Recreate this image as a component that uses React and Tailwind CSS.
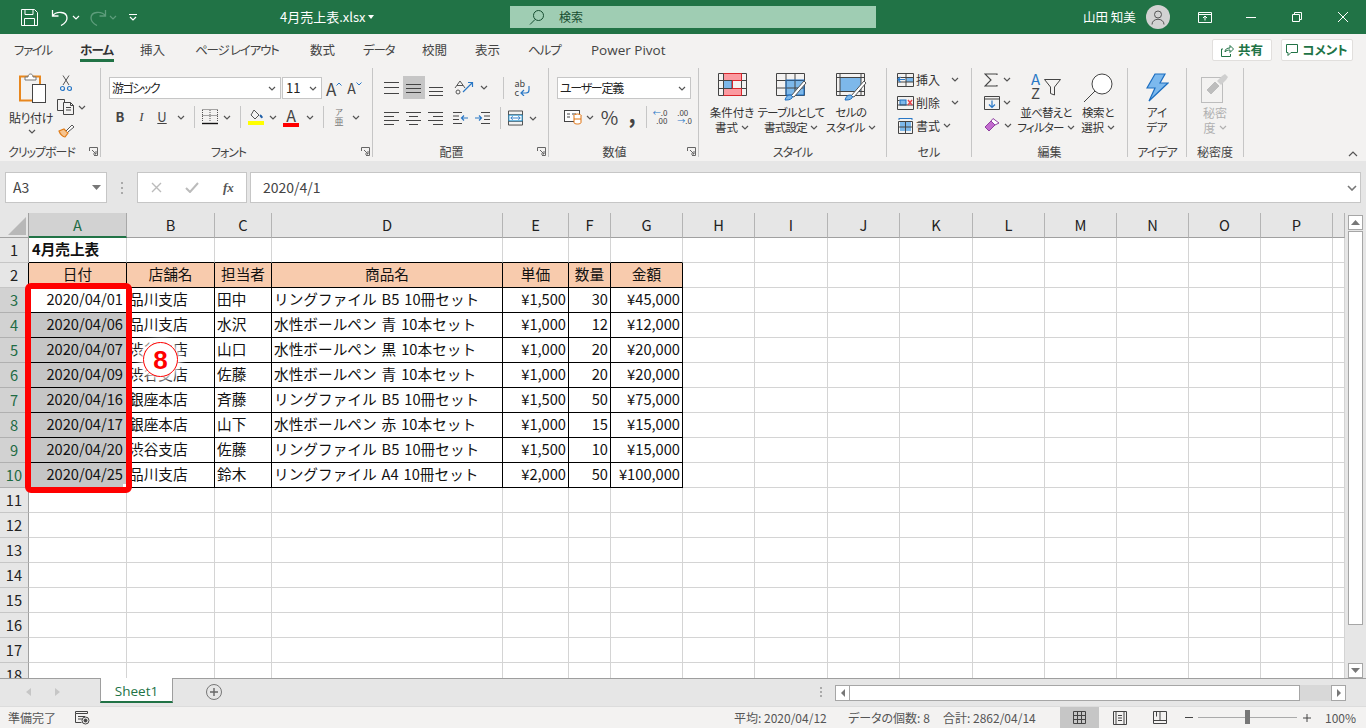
import React from 'react';

const Chev = ({ className = 'text-[#555]' }) => (
  <svg width="8" height="5" viewBox="0 0 8 5" className={`shrink-0 ${className}`} fill="none" stroke="currentColor" strokeWidth="1.2">
    <path d="M1 1l3 3 3-3" />
  </svg>
);

const Launcher = () => (
  <svg width="9" height="9" viewBox="0 0 9 9" className="absolute right-[2px] bottom-[1px]" fill="none" stroke="#666">
    <path d="M.5 4V.5h8v8H5M3 3l4 4M7 4v3H4" />
  </svg>
);

const Group = ({ className, label, launcher, labelClass = 'text-[#444]', children }) => (
  <div className={`relative h-[89px] mt-[2px] shrink-0 border-r border-[#c6c6c6] flex flex-col ${className}`}>
    <div className="h-[74px] shrink-0 relative">{children}</div>
    <div className={`h-[15px] leading-[20px] text-[12px] text-center ${labelClass}`}>{label}</div>
    {launcher && <Launcher />}
  </div>
);

const Slot = ({ className, children }) => (
  <div className={`flex items-center justify-center shrink-0 h-full ${className}`}>{children}</div>
);

const VSep = ({ className }) => (
  <div className={`flex items-center justify-center shrink-0 h-full ${className}`}>
    <div className="w-px h-[22px] bg-[#c6c6c6]" />
  </div>
);

const Combo = ({ className, textClass = '', children }) => (
  <div className={`h-[22px] shrink-0 bg-white border border-[#c6c6c6] flex items-center justify-between pl-[2px] pr-[4px] text-[13px] text-[#222] ${className}`}>
    <span className={textClass}>{children}</span>
    <Chev />
  </div>
);

const Lines = ({ ys, xs }) => (
  <svg width="16" height="16" viewBox="0 0 16 16" stroke="#444" fill="none">
    {ys.map((y, i) => (
      <path key={i} d={`M${xs[i][0]} ${y + 0.5}H${xs[i][1]}`} />
    ))}
  </svg>
);

const PasteIcon = () => (
  <svg width="28" height="32" viewBox="0 0 28 32" fill="none">
    <rect x="1" y="4.5" width="20" height="24" fill="#f3f2f1" stroke="#e8871e" strokeWidth="2" />
    <path d="M6 8V5h3c0-4 5-4 5 0h3v3z" fill="#fff" stroke="#777" />
    <rect x="13.5" y="12.5" width="13" height="18" fill="#fff" stroke="#444" />
  </svg>
);

const ScissorsIcon = () => (
  <svg width="12" height="17" viewBox="0 0 12 17" fill="none">
    <path d="M3 10L9 .5M9 10L3 .5" stroke="#555" />
    <circle cx="2.5" cy="13.5" r="2" stroke="#2a78c6" strokeWidth="1.2" />
    <circle cx="9.5" cy="13.5" r="2" stroke="#2a78c6" strokeWidth="1.2" />
  </svg>
);

const CopyIcon = () => (
  <svg width="18" height="16" viewBox="0 0 18 16" fill="none" stroke="#444">
    <path d="M6.5 11.5h-6V.5h7v3" />
    <path d="M6.5 3.5h7l3 3v9h-10zM9 8.5h5M9 11h5M13.5 3.5v3h3" fill="#f3f2f1" />
  </svg>
);

const PainterIcon = () => (
  <svg width="17" height="15" viewBox="0 0 17 15" fill="none">
    <path d="M1 8l5-2 4 4-3 4c-2 0-5-3-6-6z" fill="#f6c48f" stroke="#e07b16" strokeWidth="1.2" />
    <path d="M8 8l6-6 2 2-6 5" fill="#fff" stroke="#555" />
  </svg>
);

const BorderIcon = () => (
  <svg width="16" height="16" viewBox="0 0 16 16" fill="none">
    <path d="M.5 1v11M15.5 1v11M.5 .5h15M8 1v11M.5 6.5h15" stroke="#555" strokeDasharray="1 1" />
    <path d="M0 14.5h16" stroke="#111" strokeWidth="1.4" />
  </svg>
);

const FillIcon = () => (
  <svg width="17" height="16" viewBox="0 0 17 16" fill="none">
    <path d="M6 1l5 5-4 4-4-4z" stroke="#555" />
    <path d="M12 6c2 0 2.500 2 2 3l-1.500-1z" fill="#1f5fa8" stroke="#1f5fa8" />
    <rect x="0" y="12" width="16" height="4" fill="#ffff00" />
  </svg>
);

const FontColorIcon = () => (
  <div className="w-[16px] flex flex-col items-center">
    <span className="text-[16px] leading-[14px] text-[#444]">A</span>
    <div className="w-[16px] h-[4px] bg-[#ff0000] mt-[1px]" />
  </div>
);

const PhoneticIcon = () => (
  <div className="flex flex-col items-center text-[#777] leading-[10px]">
    <span className="text-[8px]">ア</span>
    <span className="text-[9px]">亜</span>
  </div>
);

const OrientIcon = () => (
  <svg width="20" height="17" viewBox="0 0 20 17" fill="none">
    <path d="M1 9l5-7 5 7M3 6.500h6" stroke="#555" />
    <path d="M9 13L18 4M14 3.500h4.500V8" stroke="#2a78c6" strokeWidth="1.2" />
    <circle cx="4" cy="13" r="2" stroke="#555" />
  </svg>
);

const WrapIcon = () => (
  <div className="relative w-[16px] h-[17px] text-[9px] leading-[9px] text-[#444]">
    <div>ab</div>
    <div>c</div>
    <svg width="16" height="17" viewBox="0 0 16 17" fill="none" className="absolute inset-0">
      <path d="M14 7v4c0 2-1 3-3 3H6M9 11l-3 3 3 3" stroke="#2a78c6" strokeWidth="1.2" />
    </svg>
  </div>
);

const MergeIcon = () => (
  <svg width="16" height="16" viewBox="0 0 16 16" fill="none">
    <path d="M.5 .5h15v15H.5zM.5 4.500h15M.5 11.500h15" stroke="#444" />
    <rect x="1" y="5" width="14" height="6" fill="#fff" stroke="#2a9ad6" />
    <path d="M3 8h10M5 6l-2 2 2 2M11 6l2 2-2 2" stroke="#2a78c6" />
  </svg>
);

const IndentIcon = ({ flip }) => (
  <svg width="15" height="14" viewBox="0 0 15 14" fill="none" className={flip ? '-scale-x-100' : ''}>
    <path d="M6 1.500h9M9 5h6M9 8.500h6M6 12.500h9" stroke="#444" />
    <path d="M0 7h6M4 4.500L6.500 7 4 9.500" stroke="#2a78c6" strokeWidth="1.2" />
  </svg>
);

const AccountIcon = () => (
  <svg width="18" height="15" viewBox="0 0 18 15" fill="none">
    <rect x=".5" y=".5" width="15" height="11" fill="#fff" stroke="#444" />
    <path d="M3 4h3M8 4h4M3 7h3" stroke="#444" />
    <ellipse cx="13.500" cy="5.500" rx="3.500" ry="1.500" fill="#fff" stroke="#e0720f" />
    <path d="M10 5.500v7c0 2 7 2 7 0v-7M10 9h7" fill="#fff" stroke="#e0720f" />
  </svg>
);

const CondIcon = () => (
  <svg width="29" height="23" viewBox="0 0 29 23" fill="none">
    <rect x="5" y="0" width="18" height="7" fill="#fb9aa0" />
    <rect x="5" y="8" width="9" height="7" fill="#7db8ea" />
    <rect x="5" y="15" width="18" height="7" fill="#fb9aa0" />
    <path d="M.5 .5h28v22H.5zM5.500 0v23M14 8v7M23.500 0v23M.5 7.500h28M.5 15.500h28" stroke="#444" />
    <path d="M5.500 .5h18v7h-9v8h9v7h-18" stroke="#d9262c" />
  </svg>
);

const TableIcon = () => (
  <svg width="31" height="28" viewBox="0 0 31 28" fill="none">
    <rect x="10" y="7" width="18" height="15" fill="#7db8ea" />
    <path d="M.5 .5h28v22H.5zM10 0v23M19 0v23M.5 7.500h28M.5 15h28" stroke="#444" />
    <path d="M10 7h18v15H10z" stroke="#1f6fc0" />
    <path d="M15 23L28 8l2 2-12 14z" fill="#fff" stroke="#555" />
    <path d="M9 27c1-3 2-5 5-5 2 0 3 2 2 3-2 2-4 2-7 2z" fill="#7db8ea" stroke="#1f6fc0" />
  </svg>
);

const CellStyleIcon = () => (
  <svg width="31" height="28" viewBox="0 0 31 28" fill="none">
    <rect x="4" y="5" width="21" height="13" fill="#7db8ea" />
    <path d="M.5 .5h28v22H.5zM.5 4.500h28M4 0v23M25 0v23M.5 18.500h28" stroke="#444" />
    <path d="M15 23L28 8l2 2-12 14z" fill="#fff" stroke="#555" />
    <path d="M9 27c1-3 2-5 5-5 2 0 3 2 2 3-2 2-4 2-7 2z" fill="#7db8ea" stroke="#1f6fc0" />
  </svg>
);

const InsertCellIcon = () => (
  <svg width="17" height="14" viewBox="0 0 17 14" fill="none">
    <rect x="9" y="4" width="7" height="5" fill="#7db8ea" />
    <path d="M.5 .5h16v13H.5zM9 0v14M.5 4.500h16M.5 9h16" stroke="#444" />
    <path d="M1 6.500h7M3.500 4L1 6.500 3.500 9" stroke="#2a78c6" strokeWidth="1.2" fill="#f3f2f1" />
  </svg>
);

const DeleteCellIcon = () => (
  <svg width="17" height="14" viewBox="0 0 17 14" fill="none">
    <rect x="3" y="4" width="6" height="5" fill="#7db8ea" stroke="#1f6fc0" />
    <path d="M.5 .5h16v13H.5zM.5 4.500h2M.5 9h16" stroke="#444" />
    <path d="M11 4l4 5M15 4l-4 5" stroke="#e8414a" strokeWidth="1.4" />
  </svg>
);

const FormatCellIcon = () => (
  <svg width="17" height="16" viewBox="0 0 17 16" fill="none">
    <rect x="3" y="4" width="11" height="9" fill="#7db8ea" />
    <path d="M1.500 3.500h14v12h-14zM8.500 4v11M1.500 9h14" stroke="#444" />
    <path d="M2 .5h13M2 0v2M15 0v2" stroke="#2a78c6" />
  </svg>
);

const SigmaIcon = () => (
  <svg width="14" height="14" viewBox="0 0 14 14" fill="none">
    <path d="M13 2V1H1l6 6-6 6h12v-1" stroke="#444" strokeWidth="1.1" />
  </svg>
);

const FillDownIcon = () => (
  <svg width="16" height="14" viewBox="0 0 16 14" fill="none">
    <path d="M.5 .5h15v13H.5zM.5 3h15" stroke="#444" />
    <path d="M8 4.500v7M5 8.500l3 3 3-3" stroke="#2a78c6" strokeWidth="1.2" />
  </svg>
);

const EraserIcon = () => (
  <svg width="16" height="15" viewBox="0 0 16 15" fill="none">
    <path d="M1 9l6-6 4 4-6 6z" fill="#c36bcf" stroke="#8f3fa0" />
    <path d="M7 3l2-2.500L15 5l-4 2z" fill="#fff" stroke="#8f3fa0" />
  </svg>
);

const SortIcon = () => (
  <div className="w-[30px] h-[28px] flex text-[15px] leading-[14px] -mt-[1px]">
    <div className="flex flex-col w-[13px]">
      <span className="text-[#2a78c6]">A</span>
      <span className="text-[#444]">Z</span>
    </div>
    <svg width="17" height="17" viewBox="0 0 17 17" fill="none" className="mt-[7px]">
      <path d="M.5 .5h16L10.500 8v8l-4-1.500V8z" stroke="#444" />
    </svg>
  </div>
);

const FindIcon = () => (
  <svg width="30" height="30" viewBox="0 0 30 30" fill="none">
    <circle cx="19" cy="11" r="10" fill="#fff" stroke="#444" />
    <path d="M12 18L1 29" stroke="#444" />
  </svg>
);

const BoltIcon = () => (
  <svg width="23" height="29" viewBox="0 0 23 29" fill="none">
    <path d="M9 1h10l-5 9h8L3 28l6-13H1z" fill="#7cb9ee" stroke="#1c6ec0" strokeWidth="1.2" />
  </svg>
);

const SensIcon = () => (
  <svg width="28" height="30" viewBox="0 0 28 30" fill="none">
    <rect x=".5" y="4.500" width="21" height="25" fill="#f3f2f1" stroke="#bdbdbd" />
    <path d="M5 17L14 8l5 5-9 9z" fill="#bdbdbd" stroke="#f3f2f1" />
    <path d="M16 8l5-5 3-2 3 3-2 3-5 5z" fill="#cfcfcf" />
  </svg>
);

const LargeBtn = ({ icon, line1, line2, className, iconClass = 'h-[32px]', textClass = '' }) => (
  <div className={`flex flex-col items-center shrink-0 pt-[5px] text-[11.5px] leading-[15px] text-[#333] ${className}`}>
    <div className={`flex items-start justify-center ${iconClass}`}>{icon}</div>
    <div className={`whitespace-nowrap ${textClass}`}>{line1}</div>
    <div className={`flex items-center gap-[3px] whitespace-nowrap ${textClass}`}>{line2}</div>
  </div>
);

const CellRow = ({ icon, label, gap = 'w-[35px]' }) => (
  <div className="flex items-center h-[23px] text-[12px] text-[#333]">
    <div className="w-[19px] flex justify-start">{icon}</div>
    <span className={`whitespace-nowrap ${gap}`}>{label}</span>
    <Chev />
  </div>
);

const ribbon = (
  <div className="flex h-[95px] shrink-0 bg-[#f3f2f1] relative">
    <Group className="w-[101px]" label="クリップボード" launcher labelClass="text-[#444] pr-[17px] tracking-[-1px]">
      <div className="flex">
        <div className="w-[54px] flex flex-col items-center pt-[4px] text-[12px] leading-[15px] text-[#333]">
          <div className="h-[38px] ml-[13px] mr-[1px]"><PasteIcon /></div>
          <span className="ml-[8px] tracking-[-0.4px] whitespace-nowrap">貼り付け</span>
          <div className="mt-[4px] ml-[10px]"><Chev /></div>
        </div>
        <div className="flex flex-col pt-[3px]">
          <div className="h-[24px] pl-[6px] flex items-center"><ScissorsIcon /></div>
          <div className="h-[24px] pl-[3px] flex items-center gap-[3px]"><CopyIcon /><Chev /></div>
          <div className="h-[22px] pl-[4px] flex items-center"><PainterIcon /></div>
        </div>
      </div>
    </Group>

    <Group className="w-[272px]" label="フォント" launcher labelClass="text-[#444] pr-[16px] tracking-[-1px]">
      <div className="flex pl-[8px] pt-[9px] items-center h-[31px]">
        <Combo className="w-[172px]" textClass="text-[12px] tracking-[-1.5px]">游ゴシック</Combo>
        <Combo className="w-[40px] ml-[1px]" textClass="pl-[1px]">11</Combo>
        <span className="ml-[4px] text-[17px] text-[#444] leading-none">A</span>
        <svg width="6" height="4" viewBox="0 0 6 4" fill="none" stroke="#2a78c6" className="mb-[9px]"><path d="M.5 3.500L3 1l2.500 2.500" /></svg>
        <span className="ml-[5px] text-[14px] text-[#444] leading-none">A</span>
        <svg width="6" height="4" viewBox="0 0 6 4" fill="none" stroke="#2a78c6" className="mb-[9px]"><path d="M.5 .5L3 3l2.500-2.500" /></svg>
      </div>
      <div className="flex pl-[8px] mt-[7px] h-[22px] text-[#444]">
        <Slot className="w-[22px] text-[13px] font-bold">B</Slot>
        <Slot className="w-[21px] text-[13px] italic font-['Liberation_Serif',serif]">I</Slot>
        <Slot className="w-[20px] text-[13px] underline">U</Slot>
        <Slot className="w-[18px]"><Chev /></Slot>
        <VSep className="w-[8px]" />
        <Slot className="w-[23px]"><BorderIcon /></Slot>
        <Slot className="w-[12px]"><Chev /></Slot>
        <VSep className="w-[14px]" />
        <Slot className="w-[18px]"><FillIcon /></Slot>
        <Slot className="w-[16px]"><Chev /></Slot>
        <Slot className="w-[20px]"><FontColorIcon /></Slot>
        <Slot className="w-[18px]"><Chev /></Slot>
        <VSep className="w-[8px]" />
        <Slot className="w-[24px]"><PhoneticIcon /></Slot>
        <Slot className="w-[10px]"><Chev /></Slot>
      </div>
    </Group>

    <Group className="w-[176px]" label="配置" launcher labelClass="text-[#444] pr-[18px]">
      <div className="flex pl-[8px] pt-[8px] h-[31px]">
        <Slot className="w-[22px]"><Lines ys={[2, 7, 13]} xs={[[0, 15], [0, 15], [0, 15]]} /></Slot>
        <Slot className="w-[22px] bg-[#c6c6c6]"><Lines ys={[4, 8, 12]} xs={[[0, 15], [0, 15], [0, 15]]} /></Slot>
        <Slot className="w-[22px]"><Lines ys={[7, 11, 15]} xs={[[1, 15], [1, 15], [1, 15]]} /></Slot>
        <Slot className="w-[29px] pl-[4px]"><OrientIcon /></Slot>
        <Slot className="w-[16px]"><Chev /></Slot>
        <VSep className="w-[22px]" />
        <Slot className="w-[17px]"><WrapIcon /></Slot>
      </div>
      <div className="flex pl-[8px] mt-[8px] h-[22px]">
        <Slot className="w-[22px]"><Lines ys={[2, 6, 10, 14]} xs={[[0, 15], [0, 10], [0, 15], [0, 10]]} /></Slot>
        <Slot className="w-[22px]"><Lines ys={[2, 6, 10, 14]} xs={[[0, 15], [3, 12], [0, 15], [3, 12]]} /></Slot>
        <Slot className="w-[22px]"><Lines ys={[2, 6, 10, 14]} xs={[[0, 15], [5, 15], [0, 15], [5, 15]]} /></Slot>
        <Slot className="w-[24px] pl-[3px]"><IndentIcon flip /></Slot>
        <Slot className="w-[22px]"><IndentIcon /></Slot>
        <VSep className="w-[15px]" />
        <Slot className="w-[15px]"><MergeIcon /></Slot>
        <Slot className="w-[20px]"><Chev /></Slot>
      </div>
    </Group>

    <Group className="w-[150px]" label="数値" launcher labelClass="text-[#444] pr-[18px]">
      <div className="flex pl-[8px] pt-[9px] h-[31px]">
        <Combo className="w-[134px]" textClass="text-[12px] tracking-[-1.3px]">ユーザー定義</Combo>
      </div>
      <div className="flex pl-[8px] mt-[7px] h-[22px] text-[#444]">
        <Slot className="w-[28px] pl-[3px]"><AccountIcon /></Slot>
        <Slot className="w-[9px]"><Chev /></Slot>
        <Slot className="w-[28px] text-[19px] pl-[3px]">%</Slot>
        <Slot className="w-[20px] text-[22px] font-bold pb-[8px]">,</Slot>
        <VSep className="w-[8px]" />
        <Slot className="w-[20px] text-[8px] leading-[8px] text-right">
          <div>
            <div><span className="text-[#2a78c6]">←</span>.0</div>
            <div>.00</div>
          </div>
        </Slot>
        <Slot className="w-[29px] text-[8px] leading-[8px]">
          <div>
            <div>.00</div>
            <div><span className="text-[#2a78c6]">→</span>.0</div>
          </div>
        </Slot>
      </div>
    </Group>

    <Group className="w-[188px]" label="スタイル" labelClass="text-[#444] tracking-[-1px]">
      <div className="flex pl-[10px] h-full">
        <LargeBtn className="w-[46px]" icon={<CondIcon />} line1="条件付き" line2={<>書式<Chev /></>} />
        <LargeBtn className="w-[64px] ml-[4px]" textClass="tracking-[-0.7px]" icon={<TableIcon />} line1="テーブルとして" line2={<>書式設定<Chev /></>} />
        <LargeBtn className="w-[46px] ml-[5px]" textClass="tracking-[-0.5px]" icon={<CellStyleIcon />} line1="セルの" line2={<>スタイル<Chev /></>} />
      </div>
    </Group>

    <Group className="w-[85px]" label="セル">
      <div className="flex flex-col pl-[10px] pt-[0px]">
        <CellRow icon={<InsertCellIcon />} label="挿入" />
        <CellRow icon={<DeleteCellIcon />} label="削除" />
        <CellRow icon={<FormatCellIcon />} label="書式" gap="w-[27px]" />
      </div>
    </Group>

    <Group className="w-[156px]" label="編集">
      <div className="flex h-full">
        <div className="flex flex-col pl-[12px] w-[44px] shrink-0">
          <div className="h-[23px] flex items-center gap-[5px]"><SigmaIcon /><Chev /></div>
          <div className="h-[23px] flex items-center gap-[3px]"><FillDownIcon /><Chev /></div>
          <div className="h-[23px] flex items-center gap-[4px]"><EraserIcon /><Chev /></div>
        </div>
        <LargeBtn className="w-[60px]" textClass="tracking-[-0.8px]" icon={<SortIcon />} line1="並べ替えと" line2={<>フィルター<Chev /></>} />
        <LargeBtn className="w-[44px]" textClass="tracking-[-0.3px]" icon={<FindIcon />} line1="検索と" line2={<>選択<Chev /></>} />
      </div>
    </Group>

    <Group className="w-[59px]" label="アイデア" labelClass="text-[#444] tracking-[-1px]">
      <LargeBtn className="w-full" icon={<BoltIcon />} line1="アイ" line2="デア" />
    </Group>

    <Group className="w-[57px]" label="秘密度">
      <div className="text-[#b0b0b0]">
        <div className="flex flex-col items-center pt-[5px] text-[12px] leading-[15px]">
          <div className="h-[32px]"><SensIcon /></div>
          <div>秘密</div>
          <div className="flex items-center gap-[3px]">度<Chev className="text-[#b0b0b0]" /></div>
        </div>
      </div>
    </Group>

    <svg width="10" height="6" viewBox="0 0 10 6" fill="none" stroke="#555" strokeWidth="1.2" className="absolute right-[8px] bottom-[4px]">
      <path d="M1 5l4-4 4 4" />
    </svg>
  </div>
);

const colHeads = 'A B C D E F G H I J K L M N O P'.split(' ');
const colWidths = ['w-[98px]', 'w-[88px]', 'w-[57px]', 'w-[231px]', 'w-[66px]', 'w-[42px]', 'w-[72px]', 'w-[72px]', 'w-[73px]', 'w-[72px]', 'w-[73px]', 'w-[72px]', 'w-[72px]', 'w-[72px]', 'w-[72px]', 'w-[72px]', 'w-[12px]'];

const rows = [
  ['2020/04/01', '品川支店', '田中', 'リングファイル B5 10冊セット', '¥1,500', '30', '¥45,000'],
  ['2020/04/06', '品川支店', '水沢', '水性ボールペン 青 10本セット', '¥1,000', '12', '¥12,000'],
  ['2020/04/07', '渋谷支店', '山口', '水性ボールペン 黒 10本セット', '¥1,000', '20', '¥20,000'],
  ['2020/04/09', '渋谷支店', '佐藤', '水性ボールペン 青 10本セット', '¥1,000', '20', '¥20,000'],
  ['2020/04/16', '銀座本店', '斉藤', 'リングファイル B5 10冊セット', '¥1,500', '50', '¥75,000'],
  ['2020/04/17', '銀座本店', '山下', '水性ボールペン 赤 10本セット', '¥1,000', '15', '¥15,000'],
  ['2020/04/20', '渋谷支店', '佐藤', 'リングファイル B5 10冊セット', '¥1,500', '10', '¥15,000'],
  ['2020/04/25', '品川支店', '鈴木', 'リングファイル A4 10冊セット', '¥2,000', '50', '¥100,000'],
];
const heads = ['日付', '店舗名', '担当者', '商品名', '単価', '数量', '金額'];

const SheetRow = ({ n }) => {
  const isHead = n === 2;
  const isData = n >= 3 && n <= 10;
  const inTable = n >= 2 && n <= 10;
  const selected = isData;
  const texts = isHead ? heads : isData ? rows[n - 3] : [];

  return (
    <div className="flex h-[25px] shrink-0">
      <div className={`w-[29px] shrink-0 border-b border-r flex items-center justify-center text-[14.67px] ${selected ? 'bg-[#d2d2d2] text-[#1e6b44] border-b-[#b0b0b0]' : 'bg-[#e6e6e6] text-[#222] border-b-[#c6c6c6]'} ${inTable ? 'border-r-black' : 'border-r-[#a0a0a0]'}`}>
        {n}
      </div>
      {colWidths.map((w, i) => {
        const tableCol = i < 7;
        const rightBlack = inTable && tableCol;
        const bottomBlack = (n >= 1 && n <= 10) && tableCol;
        const right = i >= 4 || i === 0;
        let cls = `${w} shrink-0 border-r border-b flex items-center whitespace-nowrap text-[14.67px] text-[#111] pb-[2px] [font-feature-settings:normal] [word-spacing:1.7px] `;
        cls += rightBlack ? 'border-r-black ' : 'border-r-[#d4d4d4] ';
        cls += bottomBlack ? 'border-b-black ' : 'border-b-[#d4d4d4] ';
        if (i === 16) cls += 'border-r-[#a0a0a0] ';
        if (isHead && tableCol) cls += 'bg-[#f8cbad] justify-center ';
        else if (isData && i === 0 && n > 3) cls += 'bg-[#c6c6c6] justify-end pr-[3px] ';
        else if (isData && i === 0) cls += 'justify-end pr-[3px] ';
        else if (isData && right) cls += 'justify-end pr-[2px] ';
        else if (n === 1 && i === 0) cls += 'pl-[3px] ';
        else cls += 'pl-[2px] ';
        return (
          <div key={i} className={cls}>
            {n === 1 && i === 0 ? <span className="font-bold">4月売上表</span> : tableCol ? texts[i] : null}
          </div>
        );
      })}
    </div>
  );
};

const sheet = (
  <div className="relative flex-1 min-h-0 flex bg-[#e6e6e6] overflow-hidden">
    <div className="w-[1345px] shrink-0 flex flex-col bg-white overflow-hidden">
      <div className="flex h-[25px] shrink-0 bg-[#e6e6e6]">
        <div className="w-[29px] shrink-0 border-r border-b border-[#a0a0a0] flex items-end justify-end pr-[2px] pb-[2px]">
          <svg width="18" height="18" viewBox="0 0 18 18"><path d="M18 0v18H0z" fill="#b8b8b8" /></svg>
        </div>
        {colWidths.map((w, i) => (
          <div
            key={i}
            className={`${w} shrink-0 border-r flex items-center justify-center text-[14.67px] ${i === 0 ? 'bg-[#d2d2d2] text-[#1e6b44] border-b-2 border-b-[#217346] border-r-[#a8a8a8]' : 'text-[#222] border-b border-b-[#a0a0a0] border-r-[#b4b4b4]'}`}
          >
            {colHeads[i]}
          </div>
        ))}
      </div>
      {Array.from({ length: 18 }, (_, i) => (
        <SheetRow key={i} n={i + 1} />
      ))}
    </div>

    {/* vertical scrollbar */}
    <div className="w-[21px] shrink-0 pl-[3px] pr-[3px] pt-[2px] flex flex-col">
      <div className="h-[15px] bg-white border border-[#a6a6a6] flex items-center justify-center">
        <svg width="9" height="5" viewBox="0 0 9 5"><path d="M4.500 0L9 5H0z" fill="#777" /></svg>
      </div>
      <div className="h-[394px] mt-px bg-white border border-[#a6a6a6]" />
      <div className="flex-1" />
      <div className="h-[15px] bg-white border border-[#a6a6a6] flex items-center justify-center">
        <svg width="9" height="5" viewBox="0 0 9 5"><path d="M4.500 5L9 0H0z" fill="#777" /></svg>
      </div>
    </div>

    {/* annotation over the selected range */}
    <div className="absolute left-[123px] top-[271px] w-[3px] h-[3px] bg-white" />
    <div className="absolute left-[25px] top-[70px] w-[107px] h-[210px] border-[6px] border-[#ff0000] rounded-[6px]" />
    <div className="absolute left-[143px] top-[129px] w-[35px] h-[35px] rounded-full bg-white border-[1.5px] border-[#ff0000] shadow-[0_0_6px_3px_rgba(255,255,255,0.95)] flex items-center justify-center text-[26px] font-bold text-[#ff0000] leading-none font-['Liberation_Sans',sans-serif]">
      8
    </div>
  </div>
);

const StatusText = ({ className, children }) => (
  <span className={`shrink-0 whitespace-nowrap ${className}`}>{children}</span>
);

export default function App() {
  return (
    <div className="w-[1366px] h-[728px] overflow-hidden flex flex-col bg-[#e6e6e6] font-['Noto_Sans_CJK_JP','Noto_Sans',sans-serif] [font-feature-settings:'palt']">
      {/* title bar */}
      <div className="h-[34px] shrink-0 bg-[#217346] flex items-center text-white text-[13px]">
        <svg width="17" height="17" viewBox="0 0 17 17" fill="none" stroke="#fff" className="ml-[21px] shrink-0">
          <path d="M.5 .5h13l3 3v13H.5zM4 .5v5h8v-5M3.500 16.500v-7h10v7" />
        </svg>
        <svg width="18" height="17" viewBox="0 0 18 17" fill="none" stroke="#fff" strokeWidth="1.3" className="ml-[13px] shrink-0">
          <path d="M1.500 1v6h6M1.500 7C5 2 16 2 16 9c0 4-3 6-6 7.500" />
        </svg>
        <Chev className="ml-[3px] text-white" />
        <svg width="18" height="17" viewBox="0 0 18 17" fill="none" stroke="#5e9d7c" strokeWidth="1.3" className="ml-[9px] shrink-0">
          <path d="M16.500 1v6h-6M16.500 7C13 2 2 2 2 9c0 4 3 6 6 7.500" />
        </svg>
        <Chev className="ml-[2px] text-[#5e9d7c]" />
        <svg width="8" height="8" viewBox="0 0 8 8" className="ml-[12px] shrink-0" fill="none" stroke="#fff">
          <path d="M0 1.500h8M1 4l3 3 3-3" strokeWidth="1.2" />
        </svg>
        <span className="ml-[143px] w-[84px] shrink-0 whitespace-nowrap">4月売上表.xlsx</span>
        <svg width="6" height="4" viewBox="0 0 6 4" className="ml-[4px] shrink-0"><path d="M0 0h6L3 4z" fill="#fff" /></svg>
        <div className="ml-[136px] w-[366px] h-[22px] shrink-0 bg-[#9fcdb3] flex items-center text-[#174e31] text-[12px]">
          <svg width="16" height="16" viewBox="0 0 16 16" fill="none" stroke="#174e31" className="ml-[19px] shrink-0">
            <circle cx="9.500" cy="6.500" r="5" />
            <path d="M6 10.500L1 15.500" />
          </svg>
          <span className="ml-[14px]">検索</span>
        </div>
        <span className="ml-[207px] w-[53px] shrink-0 text-[12.5px] whitespace-nowrap">山田 知美</span>
        <div className="ml-[10px] w-[24px] h-[24px] shrink-0 rounded-full bg-[#d2d2d2] flex items-center justify-center">
          <svg width="14" height="15" viewBox="0 0 14 15" fill="none" stroke="#555">
            <circle cx="7" cy="4.500" r="3.500" />
            <path d="M1 14.500c0-7 12-7 12 0" />
          </svg>
        </div>
        <svg width="14" height="11" viewBox="0 0 14 11" fill="none" stroke="#fff" className="ml-[28px] shrink-0">
          <path d="M.5 .5h13v10H.5zM.5 2.500h13M7 8.500V4.500M5 6l2-2 2 2" />
        </svg>
        <div className="ml-[34px] w-[10px] h-px bg-white shrink-0" />
        <svg width="10" height="10" viewBox="0 0 10 10" fill="none" stroke="#fff" className="ml-[36px] shrink-0">
          <path d="M.5 2.500h7v7h-7zM2.500 2.500v-2h7v7h-2" />
        </svg>
        <svg width="10" height="10" viewBox="0 0 10 10" fill="none" stroke="#fff" className="ml-[36px] shrink-0">
          <path d="M0 0l10 10M10 0L0 10" />
        </svg>
      </div>

      {/* tabs */}
      <div className="h-[32px] shrink-0 bg-[#f3f2f1] flex items-center pl-[14px] text-[12.5px] text-[#444]">
        <span className="w-[66px] shrink-0 tracking-[-1.4px]">ファイル</span>
        <span className="w-[60px] shrink-0 relative h-[32px] flex items-center font-bold text-[#333] tracking-[-0.8px]">
          ホーム
          <span className="absolute left-0 top-[25px] w-[34px] h-[3px] bg-[#217346]" />
        </span>
        <span className="w-[55px] shrink-0">挿入</span>
        <span className="w-[115px] shrink-0 whitespace-nowrap tracking-[-1.2px]">ページ レイアウト</span>
        <span className="w-[53px] shrink-0">数式</span>
        <span className="w-[59px] shrink-0 tracking-[-1.2px]">データ</span>
        <span className="w-[53px] shrink-0">校閲</span>
        <span className="w-[53px] shrink-0">表示</span>
        <span className="w-[63px] shrink-0 tracking-[-1px]">ヘルプ</span>
        <span className="shrink-0 whitespace-nowrap font-['Open_Sans',sans-serif] text-[13.5px]">Power Pivot</span>
        <div className="ml-auto w-[60px] h-[22px] shrink-0 bg-white border border-[#e1dfdd] rounded-[2px] flex items-center justify-center gap-[4px] text-[#217346] font-bold text-[12.5px]">
          <svg width="13" height="13" viewBox="0 0 13 13" fill="none" stroke="#217346">
            <path d="M2 5H.5v7.500h9V10M4 8c0-3 2-4 5-4V1.500L12.500 5 9 8.500V6C7 6 5 6.500 4 8z" />
          </svg>
          共有
        </div>
        <div className="ml-[9px] mr-[13px] w-[72px] h-[22px] shrink-0 bg-white border border-[#e1dfdd] rounded-[2px] flex items-center justify-center gap-[4px] text-[#217346] font-bold text-[12.5px]">
          <svg width="12" height="12" viewBox="0 0 12 12" fill="none" stroke="#217346">
            <path d="M.5 .5h11v8H5l-3 3v-3H.5z" />
          </svg>
          コメント
        </div>
      </div>

      {ribbon}

      {/* formula bar */}
      <div className="h-[52px] shrink-0 bg-[#e6e6e6] flex items-start pt-[11px] pl-[5px]">
        <div className="w-[102px] h-[31px] shrink-0 bg-white border border-[#c6c6c6] flex items-center justify-between pl-[7px] pr-[5px] text-[14px] text-[#444]">
          A3
          <svg width="9" height="5" viewBox="0 0 9 5"><path d="M0 0h9L4.500 5z" fill="#777" /></svg>
        </div>
        <div className="w-[30px] h-[31px] shrink-0 flex flex-col items-center justify-center gap-[3px]">
          <div className="w-[2px] h-[2px] bg-[#aaa]" />
          <div className="w-[2px] h-[2px] bg-[#aaa]" />
          <div className="w-[2px] h-[2px] bg-[#aaa]" />
        </div>
        <div className="w-[110px] h-[31px] shrink-0 bg-white border border-[#c6c6c6] flex items-center">
          <svg width="11" height="11" viewBox="0 0 11 11" fill="none" stroke="#bbb" strokeWidth="1.4" className="ml-[13px]"><path d="M1 1l9 9M10 1l-9 9" /></svg>
          <svg width="14" height="11" viewBox="0 0 14 11" fill="none" stroke="#bbb" strokeWidth="2" className="ml-[23px]"><path d="M1 6l4 4 8-9" /></svg>
          <span className="ml-[24px] text-[13px] italic font-bold text-[#555] font-['Liberation_Serif',serif]">fx</span>
        </div>
        <div className="ml-[3px] w-[1111px] h-[31px] shrink-0 bg-white border border-[#c6c6c6] flex items-center justify-between pl-[12px] pr-[3px] text-[14px] text-[#444]">
          2020/4/1
          <svg width="10" height="6" viewBox="0 0 10 6" fill="none" stroke="#777" strokeWidth="1.6"><path d="M1 1l4 4 4-4" /></svg>
        </div>
      </div>

      {sheet}

      {/* sheet tabs */}
      <div className="h-[28px] shrink-0 bg-[#e6e6e6] border-t border-[#9e9e9e] flex items-start">
        <div className="w-[100px] h-[26px] shrink-0 flex items-center pl-[26px] gap-[24px]">
          <svg width="5" height="8" viewBox="0 0 5 8"><path d="M5 0v8L0 4z" fill="#c6c6c6" /></svg>
          <svg width="5" height="8" viewBox="0 0 5 8"><path d="M0 0v8l5-4z" fill="#c6c6c6" /></svg>
        </div>
        <div className="w-[73px] h-[25px] -mt-px pt-[3px] shrink-0 bg-white border-x border-[#9e9e9e] border-b-2 border-b-[#217346] flex items-center justify-center text-[13.5px] text-[#217346] font-['Open_Sans',sans-serif]">
          Sheet1
        </div>
        <div className="ml-[33px] mt-[5px] w-[16px] h-[16px] shrink-0 rounded-full border border-[#777] flex items-center justify-center">
          <svg width="8" height="8" viewBox="0 0 8 8" stroke="#666" strokeWidth="1.4"><path d="M4 0v8M0 4h8" /></svg>
        </div>
        <div className="ml-[598px] mt-[8px] flex flex-col gap-[2px] shrink-0">
          <div className="w-[2px] h-[2px] bg-[#aaa]" />
          <div className="w-[2px] h-[2px] bg-[#aaa]" />
          <div className="w-[2px] h-[2px] bg-[#aaa]" />
        </div>
        <div className="ml-[13px] mt-[6px] w-[511px] h-[16px] shrink-0 flex bg-[#d8d8d8]">
          <div className="w-[15px] bg-white border border-[#a6a6a6] flex items-center justify-center">
            <svg width="4" height="8" viewBox="0 0 4 8"><path d="M4 0v8L0 4z" fill="#777" /></svg>
          </div>
          <div className="w-[450px] bg-white border border-[#a6a6a6] border-l-0" />
          <div className="flex-1" />
          <div className="w-[15px] bg-white border border-[#a6a6a6] flex items-center justify-center">
            <svg width="4" height="8" viewBox="0 0 4 8"><path d="M0 0v8l4-4z" fill="#777" /></svg>
          </div>
        </div>
      </div>

      {/* status bar */}
      <div className="h-[22px] shrink-0 bg-[#f3f2f1] border-t border-[#dcdcdc] flex items-center text-[12px] text-[#555]">
        <StatusText className="ml-[8px] w-[48px]">準備完了</StatusText>
        <svg width="15" height="14" viewBox="0 0 15 14" fill="none" stroke="#444" className="ml-[19px] shrink-0">
          <path d="M.5 .5h12v2H.5zM.5 2.500v9h6M3 5.500h7M3 8h4" />
          <circle cx="10.500" cy="9.500" r="3.500" />
          <circle cx="10.500" cy="9.500" r="1.500" fill="#444" />
        </svg>
        <StatusText className="ml-[644px] w-[98px]">平均: 2020/04/12</StatusText>
        <StatusText className="ml-[16px] w-[79px]">データの個数: 8</StatusText>
        <StatusText className="ml-[16px] w-[99px]">合計: 2862/04/14</StatusText>
        <div className="ml-[18px] w-[39px] h-[22px] shrink-0 bg-[#c6c6c6] flex items-center justify-center">
          <svg width="13" height="13" viewBox="0 0 13 13" fill="none" stroke="#444"><path d="M.5 .5h12v12H.5zM4.500 0v13M8.500 0v13M0 4.500h13M0 8.500h13" /></svg>
        </div>
        <svg width="14" height="14" viewBox="0 0 14 14" fill="none" stroke="#444" className="ml-[14px] shrink-0">
          <path d="M.5 .5h13v13H.5zM3 .5v13M11 .5v13M5 4.500h4M5 7h4M5 9.500h4" />
        </svg>
        <svg width="14" height="14" viewBox="0 0 14 14" fill="none" stroke="#444" className="ml-[26px] shrink-0">
          <path d="M.5 .5h13v12H.5zM.5 9.500h13M7 .5v9M3.500 .5v5" />
        </svg>
        <div className="ml-[18px] w-[8px] h-px bg-[#444] shrink-0" />
        <div className="ml-[5px] w-[99px] shrink-0 h-px bg-[#aaa] relative">
          <div className="absolute left-[47px] -top-[7px] w-[5px] h-[14px] bg-[#777]" />
        </div>
        <svg width="8" height="8" viewBox="0 0 8 8" stroke="#444" className="ml-[6px] shrink-0"><path d="M4 0v8M0 4h8" /></svg>
        <StatusText className="ml-[14px]">100%</StatusText>
      </div>
    </div>
  );
}
